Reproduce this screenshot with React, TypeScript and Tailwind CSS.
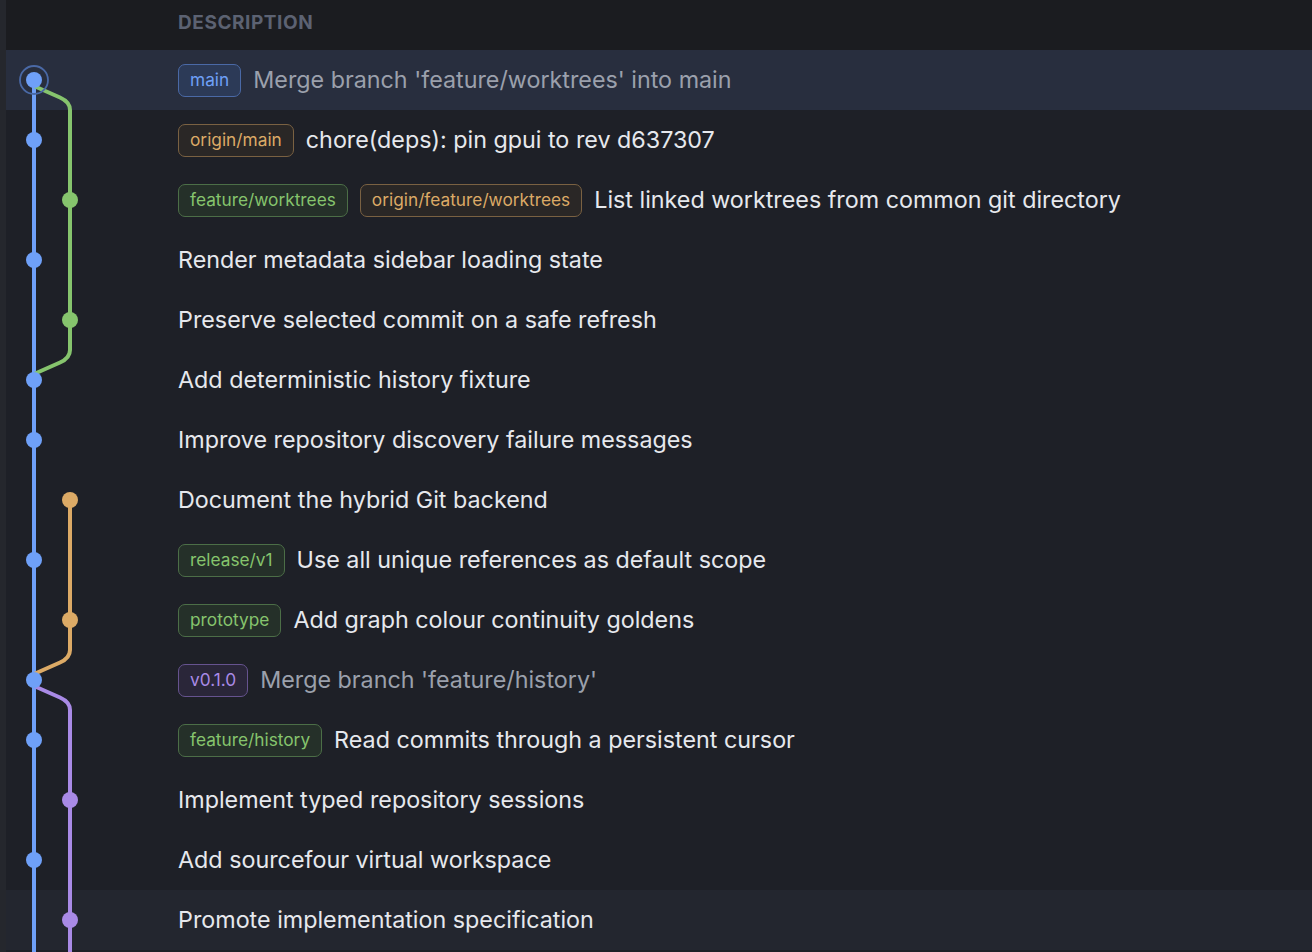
import React from "react";

type Tone = "blue" | "orange" | "green" | "purple";

const toneClass: Record<Tone, string> = {
  blue: "text-[#6fa0f8] border-[#4a69a6] bg-[#2c3a57]",
  orange: "text-[#dcaa66] border-[#7a6142] bg-[#2a2726]",
  green: "text-[#86c46d] border-[#4c6e47] bg-[#253029]",
  purple: "text-[#a98ae6] border-[#66538f] bg-[#2a2639]",
};

const C = {
  blue: "#6fa0f8",
  green: "#86c46d",
  orange: "#dcaa66",
  purple: "#a98ae6",
};

const L0 = 28;
const L1 = 64;

type Seg =
  | { kind: "v"; lane: number; y1: number; y2: number; color: string }
  | { kind: "down"; color: string }
  | { kind: "up"; color: string };

type Row = {
  badges: { label: string; tone: Tone }[];
  text: string;
  dim?: boolean;
  node?: { lane: number; color: string };
  segs: Seg[];
  bg?: string;
  selected?: boolean;
};

const full = (lane: number, color: string): Seg => ({ kind: "v", lane, y1: 0, y2: 60, color });

const rows: Row[] = [
  {
    badges: [{ label: "main", tone: "blue" }],
    text: "Merge branch 'feature/worktrees' into main",
    dim: true,
    node: { lane: L0, color: C.blue },
    segs: [{ kind: "v", lane: L0, y1: 30, y2: 60, color: C.blue }, { kind: "down", color: C.green }],
    bg: "bg-[#282e3e]",
    selected: true,
  },
  {
    badges: [{ label: "origin/main", tone: "orange" }],
    text: "chore(deps): pin gpui to rev d637307",
    node: { lane: L0, color: C.blue },
    segs: [full(L0, C.blue), full(L1, C.green)],
  },
  {
    badges: [
      { label: "feature/worktrees", tone: "green" },
      { label: "origin/feature/worktrees", tone: "orange" },
    ],
    text: "List linked worktrees from common git directory",
    node: { lane: L1, color: C.green },
    segs: [full(L0, C.blue), full(L1, C.green)],
  },
  {
    badges: [],
    text: "Render metadata sidebar loading state",
    node: { lane: L0, color: C.blue },
    segs: [full(L0, C.blue), full(L1, C.green)],
  },
  {
    badges: [],
    text: "Preserve selected commit on a safe refresh",
    node: { lane: L1, color: C.green },
    segs: [full(L0, C.blue), full(L1, C.green)],
  },
  {
    badges: [],
    text: "Add deterministic history fixture",
    node: { lane: L0, color: C.blue },
    segs: [full(L0, C.blue), { kind: "up", color: C.green }],
  },
  {
    badges: [],
    text: "Improve repository discovery failure messages",
    node: { lane: L0, color: C.blue },
    segs: [full(L0, C.blue)],
  },
  {
    badges: [],
    text: "Document the hybrid Git backend",
    node: { lane: L1, color: C.orange },
    segs: [full(L0, C.blue), { kind: "v", lane: L1, y1: 30, y2: 60, color: C.orange }],
  },
  {
    badges: [{ label: "release/v1", tone: "green" }],
    text: "Use all unique references as default scope",
    node: { lane: L0, color: C.blue },
    segs: [full(L0, C.blue), full(L1, C.orange)],
  },
  {
    badges: [{ label: "prototype", tone: "green" }],
    text: "Add graph colour continuity goldens",
    node: { lane: L1, color: C.orange },
    segs: [full(L0, C.blue), full(L1, C.orange)],
  },
  {
    badges: [{ label: "v0.1.0", tone: "purple" }],
    text: "Merge branch 'feature/history'",
    dim: true,
    node: { lane: L0, color: C.blue },
    segs: [full(L0, C.blue), { kind: "up", color: C.orange }, { kind: "down", color: C.purple }],
  },
  {
    badges: [{ label: "feature/history", tone: "green" }],
    text: "Read commits through a persistent cursor",
    node: { lane: L0, color: C.blue },
    segs: [full(L0, C.blue), full(L1, C.purple)],
  },
  {
    badges: [],
    text: "Implement typed repository sessions",
    node: { lane: L1, color: C.purple },
    segs: [full(L0, C.blue), full(L1, C.purple)],
  },
  {
    badges: [],
    text: "Add sourcefour virtual workspace",
    node: { lane: L0, color: C.blue },
    segs: [full(L0, C.blue), full(L1, C.purple)],
  },
  {
    badges: [],
    text: "Promote implementation specification",
    node: { lane: L1, color: C.purple },
    segs: [full(L0, C.blue), full(L1, C.purple)],
    bg: "bg-[#23262f]",
  },
  {
    badges: [],
    text: "",
    segs: [full(L0, C.blue), full(L1, C.purple)],
  },
];

function Graph({ row }: { row: Row }) {
  return (
    <svg width="172" height="60" viewBox="0 0 172 60" className="block shrink-0">
      {row.segs.map((s, i) => {
        if (s.kind === "v") {
          return <line key={i} x1={s.lane} y1={s.y1} x2={s.lane} y2={s.y2} stroke={s.color} strokeWidth={4} />;
        }
        if (s.kind === "down") {
          return (
            <path
              key={i}
              d={`M${L0} 36 L54 47.5 Q${L1} 52 ${L1} 60`}
              stroke={s.color}
              strokeWidth={4}
              fill="none"
            />
          );
        }
        return (
          <path
            key={i}
            d={`M${L0} 24 L54 12.5 Q${L1} 8 ${L1} 0`}
            stroke={s.color}
            strokeWidth={4}
            fill="none"
          />
        );
      })}
      {row.selected && row.node && (
        <circle cx={row.node.lane} cy={30} r={14} fill="none" stroke="#4a69a6" strokeWidth={1.8} />
      )}
      {row.node && <circle cx={row.node.lane} cy={30} r={8} fill={row.node.color} />}
    </svg>
  );
}

export default function App() {
  return (
    <div
      className="flex h-[952px] w-full overflow-hidden bg-[#1e2027]"
      style={{ fontFamily: "Inter, 'Liberation Sans', sans-serif" }}
    >
      <div className="w-[6px] shrink-0 bg-[#25272d]" />
      <div className="flex min-w-0 flex-1 flex-col">
        <div className="flex h-[50px] shrink-0 items-center bg-[#1b1c20] pb-[3px] pl-[172px]">
          <span className="text-[19px] font-bold tracking-[0.03em] text-[#5c6272]">DESCRIPTION</span>
        </div>
        {rows.map((row, i) => (
          <div key={i} className={`flex h-[60px] shrink-0 items-center ${row.bg ?? ""}`}>
            <Graph row={row} />
            {row.text && (
              <div className="flex min-w-0 items-center gap-[12px] whitespace-nowrap">
                {row.badges.map((b) => (
                  <span
                    key={b.label}
                    className={`flex h-[33px] items-center rounded-[7px] border-[1.5px] px-[11px] text-[17.3px] ${toneClass[b.tone]}`}
                  >
                    {b.label}
                  </span>
                ))}
                <span className={`text-[23.3px] ${row.dim ? "text-[#9ba0ac]" : "text-[#e6e8ed]"}`}>{row.text}</span>
              </div>
            )}
          </div>
        ))}
      </div>
    </div>
  );
}
